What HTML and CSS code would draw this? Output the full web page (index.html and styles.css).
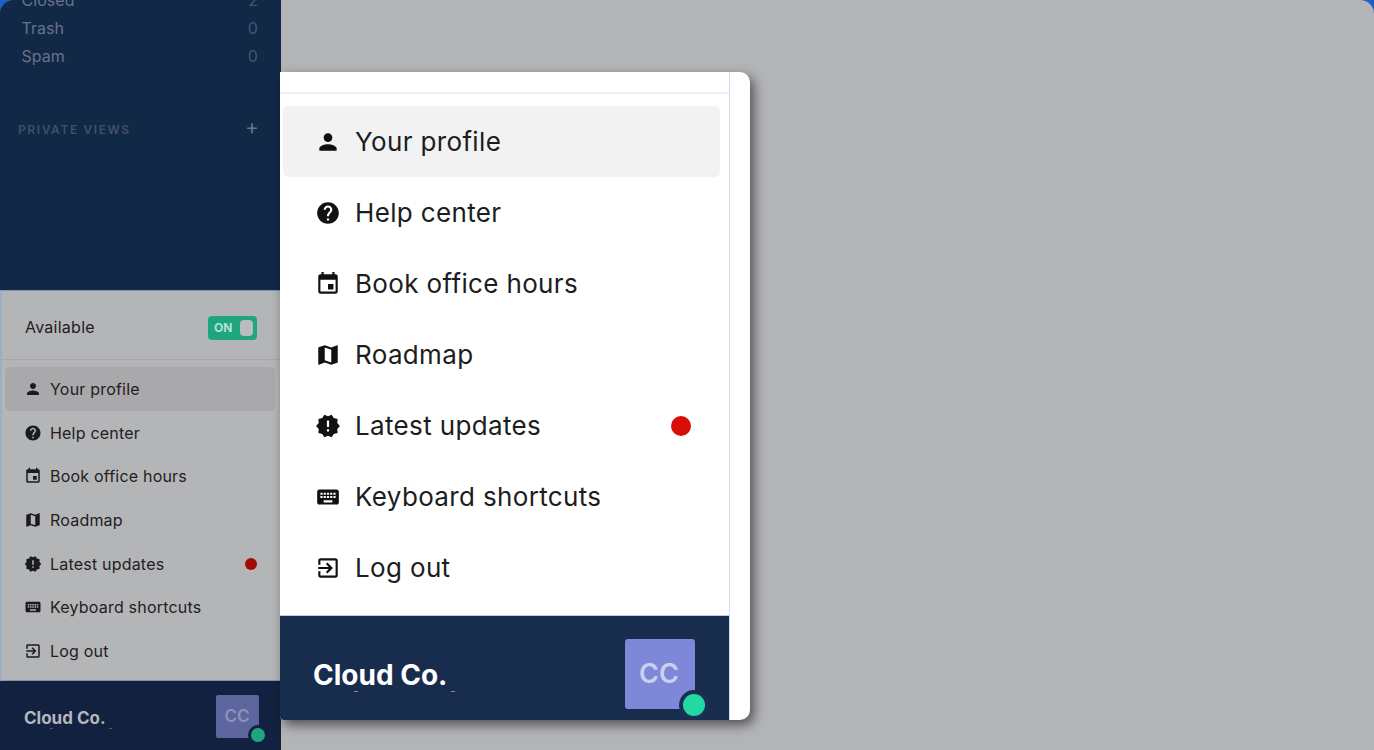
FILE: index.html
```html
<!DOCTYPE html>
<html lang="en">
<head>
    <meta charset="UTF-8">
    <title>Cloud Co. - Account menu</title>
    <link rel="stylesheet" href="styles.css">
</head>
<body>
    <!-- Icons shared by both menus -->
    <svg class="icon-defs" aria-hidden="true">
        <symbol id="i-person" viewBox="0 0 24 24"><path d="M12 12c2.21 0 4-1.79 4-4s-1.79-4-4-4-4 1.79-4 4 1.79 4 4 4zm0 2c-2.67 0-8 1.34-8 4v2h16v-2c0-2.66-5.33-4-8-4z"/></symbol>
        <symbol id="i-help" viewBox="0 0 24 24"><path d="M12 2C6.48 2 2 6.48 2 12s4.48 10 10 10 10-4.48 10-10S17.52 2 12 2zm1 17h-2v-2h2v2zm2.07-7.75l-.9.92C13.45 12.9 13 13.5 13 15h-2v-.5c0-1.1.45-2.1 1.17-2.83l1.24-1.26c.37-.36.59-.86.59-1.41 0-1.1-.9-2-2-2s-2 .9-2 2H8c0-2.21 1.79-4 4-4s4 1.79 4 4c0 .88-.36 1.68-.93 2.25z"/></symbol>
        <symbol id="i-event" viewBox="0 0 24 24"><path d="M17 12h-5v5h5v-5zM16 1v2H8V1H6v2H5c-1.11 0-1.99.9-1.99 2L3 19c0 1.1.89 2 2 2h14c1.1 0 2-.9 2-2V5c0-1.1-.9-2-2-2h-1V1h-2zm3 18H5V8h14v11z"/></symbol>
        <symbol id="i-map" viewBox="0 0 24 24"><path d="M20.5 3l-.16.03L15 5.1 9 3 3.36 4.9c-.21.07-.36.25-.36.48V20.5c0 .28.22.5.5.5l.16-.03L9 18.9l6 2.1 5.64-1.9c.21-.07.36-.25.36-.48V3.5c0-.28-.22-.5-.5-.5zM15 19l-6-2.11V5l6 2.11V19z"/></symbol>
        <symbol id="i-updates" viewBox="0 0 24 24"><path d="M23 12l-2.44-2.78.34-3.68-3.61-.82-1.89-3.18L12 3 8.6 1.54 6.71 4.72l-3.61.81.34 3.68L1 12l2.44 2.78-.34 3.69 3.61.82 1.89 3.18L12 21l3.4 1.46 1.89-3.18 3.61-.82-.34-3.68L23 12zm-10 5h-2v-2h2v2zm0-4h-2V7h2v6z"/></symbol>
        <symbol id="i-keyboard" viewBox="0 0 24 24"><path d="M20 5H4c-1.1 0-1.99.9-1.99 2L2 17c0 1.1.9 2 2 2h16c1.1 0 2-.9 2-2V7c0-1.1-.9-2-2-2zm-9 3h2v2h-2V8zm0 3h2v2h-2v-2zM8 8h2v2H8V8zm0 3h2v2H8v-2zm-1 2H5v-2h2v2zm0-3H5V8h2v2zm9 7H8v-2h8v2zm0-4h-2v-2h2v2zm0-3h-2V8h2v2zm3 3h-2v-2h2v2zm0-3h-2V8h2v2z"/></symbol>
        <symbol id="i-logout" viewBox="0 0 24 24"><path d="M10.09 15.59L11.5 17l5-5-5-5-1.41 1.41L12.67 11H3v2h9.67l-2.58 2.59zM19 3H5c-1.11 0-2 .9-2 2v4h2V5h14v14H5v-4H3v4c0 1.1.89 2 2 2h14c1.1 0 2-.9 2-2V5c0-1.1-.9-2-2-2z"/></symbol>
    </svg>

    <div class="app">
        <!-- Sidebar (dimmed) -->
        <aside class="sidebar">
            <div class="nav">
                <ul class="folders">
                    <li><span>Closed</span><span>2</span></li>
                    <li><span>Trash</span><span>0</span></li>
                    <li><span>Spam</span><span>0</span></li>
                </ul>
                <div class="views-head">
                    <span>PRIVATE VIEWS</span>
                    <span class="plus">+</span>
                </div>
            </div>

            <div class="menu">
                <div class="status">
                    <span class="status-label">Available</span>
                    <span class="toggle"><b>ON</b><i></i></span>
                </div>
                <ul class="items">
                    <li class="item active"><svg><use href="#i-person"/></svg>Your profile</li>
                    <li class="item"><svg><use href="#i-help"/></svg>Help center</li>
                    <li class="item"><svg><use href="#i-event"/></svg>Book office hours</li>
                    <li class="item"><svg><use href="#i-map"/></svg>Roadmap</li>
                    <li class="item"><svg><use href="#i-updates"/></svg>Latest updates<span class="dot"></span></li>
                    <li class="item"><svg><use href="#i-keyboard"/></svg>Keyboard shortcuts</li>
                    <li class="item"><svg><use href="#i-logout"/></svg>Log out</li>
                </ul>
            </div>

            <div class="account">
                <span class="name">Cloud Co.</span>
                <span class="avatar">CC<i class="online"></i></span>
            </div>
        </aside>

        <main class="content"></main>
    </div>

    <!-- Zoomed callout of the same menu -->
    <div class="callout">
        <div class="callout-inner">
            <div class="menu">
                <ul class="items">
                    <li class="item active"><svg><use href="#i-person"/></svg>Your profile</li>
                    <li class="item"><svg><use href="#i-help"/></svg>Help center</li>
                    <li class="item"><svg><use href="#i-event"/></svg>Book office hours</li>
                    <li class="item"><svg><use href="#i-map"/></svg>Roadmap</li>
                    <li class="item"><svg><use href="#i-updates"/></svg>Latest updates<span class="dot"></span></li>
                    <li class="item"><svg><use href="#i-keyboard"/></svg>Keyboard shortcuts</li>
                    <li class="item"><svg><use href="#i-logout"/></svg>Log out</li>
                </ul>
            </div>
            <div class="account">
                <span class="name">Cloud Co.</span>
                <span class="avatar">CC<i class="online"></i></span>
            </div>
        </div>
    </div>
</body>
</html>
```

FILE: styles.css
```css
/* Reset */
* {
    margin: 0;
    padding: 0;
    box-sizing: border-box;
}

ul {
    list-style: none;
}

body {
    height: 100vh;
    overflow: hidden;
    background: #1c5fc6;
    font-family: "Inter", "Liberation Sans", sans-serif;
    color: #1f2023;
}

.icon-defs {
    display: none;
}

.app {
    display: flex;
    height: 100%;
    border-radius: 14px 14px 0 0;
    overflow: hidden;
}

.content {
    flex: 1;
    background: #b3b4b6;
}

/* Sidebar */
.sidebar {
    width: 281px;
    display: flex;
    flex-direction: column;
    background: #122847;
}

.nav {
    height: 290px;
    padding: 0 23px 0 21.5px;
    overflow: hidden;
}

.folders {
    margin-top: -14px;
    font-size: 16px;
    letter-spacing: .05px;
    color: #66738a;
}

.folders li {
    height: 28px;
    display: flex;
    align-items: center;
    justify-content: space-between;
}

.folders li span:last-child {
    color: #475671;
}

.views-head {
    height: 24px;
    display: flex;
    align-items: center;
    justify-content: space-between;
    margin: 47px 0 0 -3.5px;
    font-size: 12px;
    font-weight: 600;
    letter-spacing: 1.6px;
    color: #414f6a;
}

.plus {
    margin: -6px -1px 0 0;
    font-size: 21px;
    font-weight: 400;
    letter-spacing: 0;
    color: #66738a;
}

/* Menu */
.sidebar .menu {
    height: 391px;
    display: flex;
    flex-direction: column;
    background: #b4b5b7;
    border-top: 1px solid #8293ab;
    border-left: 2px solid #9eaec4;
    border-bottom: 1px solid #8293ab;
}

.status {
    height: 69px;
    flex: none;
    display: flex;
    align-items: center;
    justify-content: space-between;
    padding: 6px 24px 0 23px;
    border-bottom: 1px solid #a5a7a9;
    font-size: 16px;
    letter-spacing: .25px;
}

.status-label {
    margin-bottom: 2px;
}

.toggle {
    width: 49px;
    height: 24px;
    display: flex;
    align-items: center;
    justify-content: space-between;
    padding: 0 4px 1px 6px;
    border-radius: 4px;
    background: #1fa67f;
    letter-spacing: 0;
}

.toggle b {
    font-size: 12px;
    font-weight: 700;
    color: #b9e0d3;
}

.toggle i {
    width: 13px;
    height: 16px;
    border-radius: 4px;
    background: #b9bbbd;
}

.items {
    flex: 1;
    display: flex;
    flex-direction: column;
}

.sidebar .items {
    padding: 7px 6px 7px 3px;
}

.item {
    flex: 1;
    display: flex;
    align-items: center;
    gap: 8px;
    padding: 0 18px 0 19px;
    border-radius: 5px;
    font-size: 16px;
    letter-spacing: .2px;
    color: #1f2023;
}

.item svg {
    width: 18px;
    height: 18px;
    flex: none;
    fill: #1a1b1e;
}

.item.active {
    background: #a9a9ab;
}

.dot {
    width: 12px;
    height: 12px;
    margin-left: auto;
    border-radius: 50%;
    background: #a30a0a;
}

/* Account footer */
.account {
    flex: 1;
    display: flex;
    align-items: center;
    justify-content: space-between;
    padding: 2px 22px 0 24px;
    background: #11213f;
}

.name {
    margin-top: 3px;
    padding: 0 6px 1px 0;
    font-size: 17px;
    font-weight: 700;
    color: #b4b7bd;
    background:
        linear-gradient(#4a5670, #4a5670) 26px 100% / 3px 1px no-repeat,
        linear-gradient(#4a5670, #4a5670) 85px 100% / 3px 1px no-repeat;
}

.avatar {
    position: relative;
    width: 43px;
    height: 43px;
    display: flex;
    align-items: center;
    justify-content: center;
    padding: 0 1px 1px 0;
    border-radius: 2px;
    background: #5d659e;
    font-size: 17px;
    font-weight: 600;
    color: #8f93b9;
}

.online {
    position: absolute;
    right: -9px;
    bottom: -7px;
    width: 20px;
    height: 20px;
    border-radius: 50%;
    border: 3px solid #11213f;
    background: #1fa67f;
}

/* Zoomed callout */
.callout {
    position: absolute;
    left: 280px;
    top: 72px;
    width: 470px;
    height: 648px;
    padding-right: 20px;
    overflow: hidden;
    background: #fff;
    border-radius: 0 10px 10px 4px;
    box-shadow: 4px 5px 12px rgba(0, 0, 0, .55);
}

.callout-inner {
    height: 100%;
    display: flex;
    flex-direction: column;
    border-right: 1px solid #cddcf5;
}

.callout .menu {
    flex: none;
    margin-top: 20px;
    height: 524px;
    border-top: 2px solid #eeeef3;
    border-bottom: 1px solid #b9cbe8;
}

.callout .items {
    height: 100%;
    padding: 12px 9px 12px 3px;
}

.callout .item {
    gap: 14px;
    padding: 0 29px 0 32px;
    font-size: 26px;
    letter-spacing: .35px;
    color: #1c1d20;
}

.callout .item svg {
    width: 26px;
    height: 26px;
    fill: #111;
}

.callout .item.active {
    background: #f2f2f2;
}

.callout .dot {
    width: 20px;
    height: 20px;
    background: #d70f08;
}

.callout .account {
    padding: 0 34px 0 33px;
    background: #182d4e;
}

.callout .name {
    margin-top: 14px;
    padding: 0 10px 0 0;
    font-size: 28px;
    line-height: 34px;
    color: #fff;
    background:
        linear-gradient(#7f8a9e, #7f8a9e) 41px 100% / 4px 1px no-repeat,
        linear-gradient(#7f8a9e, #7f8a9e) 138px 100% / 4px 1px no-repeat;
}

.callout .avatar {
    width: 70px;
    height: 70px;
    margin-top: 12px;
    padding: 0 2px 2px 0;
    border-radius: 3px;
    background: #7f87d9;
    font-size: 27px;
    color: #cccff0;
}

.callout .online {
    right: -14px;
    bottom: -11px;
    width: 30px;
    height: 30px;
    border: 4px solid #1b2f55;
    background: #24d9a1;
}
```
